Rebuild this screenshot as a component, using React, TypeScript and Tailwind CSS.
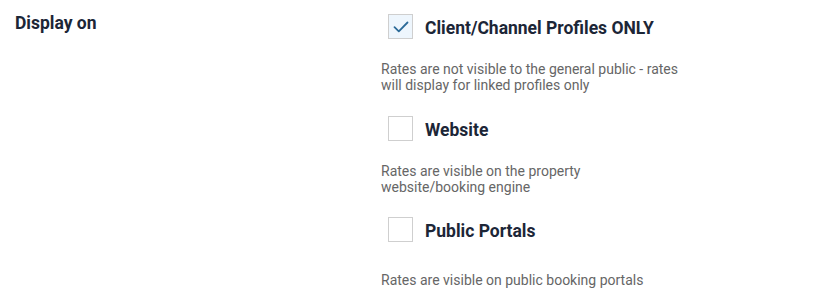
import React from "react";

type Option = {
    label: string;
    description: string;
    checked: boolean;
    descClass: string;
};

const options: Option[] = [
    {
        label: "Client/Channel Profiles ONLY",
        description: "Rates are not visible to the general public - rates will display for linked profiles only",
        checked: true,
        descClass: "w-[320px] mt-[22px] mb-[23px]",
    },
    {
        label: "Website",
        description: "Rates are visible on the property website/booking engine",
        checked: false,
        descClass: "w-[290px] mt-[22px] mb-[22px]",
    },
    {
        label: "Public Portals",
        description: "Rates are visible on public booking portals",
        checked: false,
        descClass: "w-[320px] mt-[30px]",
    },
];

function CheckBox({ checked }: { checked: boolean }) {
    return (
        <div
            className={
                checked
                    ? "w-[25px] h-[25px] border border-[#cfcfcf] bg-[#eef6fd] flex items-center justify-center shrink-0"
                    : "w-[25px] h-[25px] border border-[#cfcfcf] bg-white shrink-0"
            }
        >
            {checked && (
                <svg width="16" height="12" viewBox="0 0 16 12" fill="none">
                    <path d="M1.5 6.2 L5.8 10.3 L14.5 1.5" stroke="#2b6a98" strokeWidth="1.8" strokeLinecap="round" strokeLinejoin="round" />
                </svg>
            )}
        </div>
    );
}

export default function App() {
    return (
        <div className="w-[818px] h-[304px] bg-white flex px-[15px] pt-[14px] font-['Roboto',sans-serif]">
            <div className="w-[366px] shrink-0 text-[17.5px] leading-[19px] font-bold text-[#1c2637]">Display on</div>
            <div className="w-[320px] flex flex-col">
                {options.map((opt) => (
                    <div key={opt.label} className="flex flex-col">
                        <div className="flex items-center h-[25px] pl-[7px] gap-[12px]">
                            <CheckBox checked={opt.checked} />
                            <span className="text-[17.5px] font-bold text-[#1c2637] leading-none translate-y-[1.5px]">{opt.label}</span>
                        </div>
                        <p className={"text-[14px] leading-[16px] text-[#666666] " + opt.descClass}>{opt.description}</p>
                    </div>
                ))}
            </div>
        </div>
    );
}
